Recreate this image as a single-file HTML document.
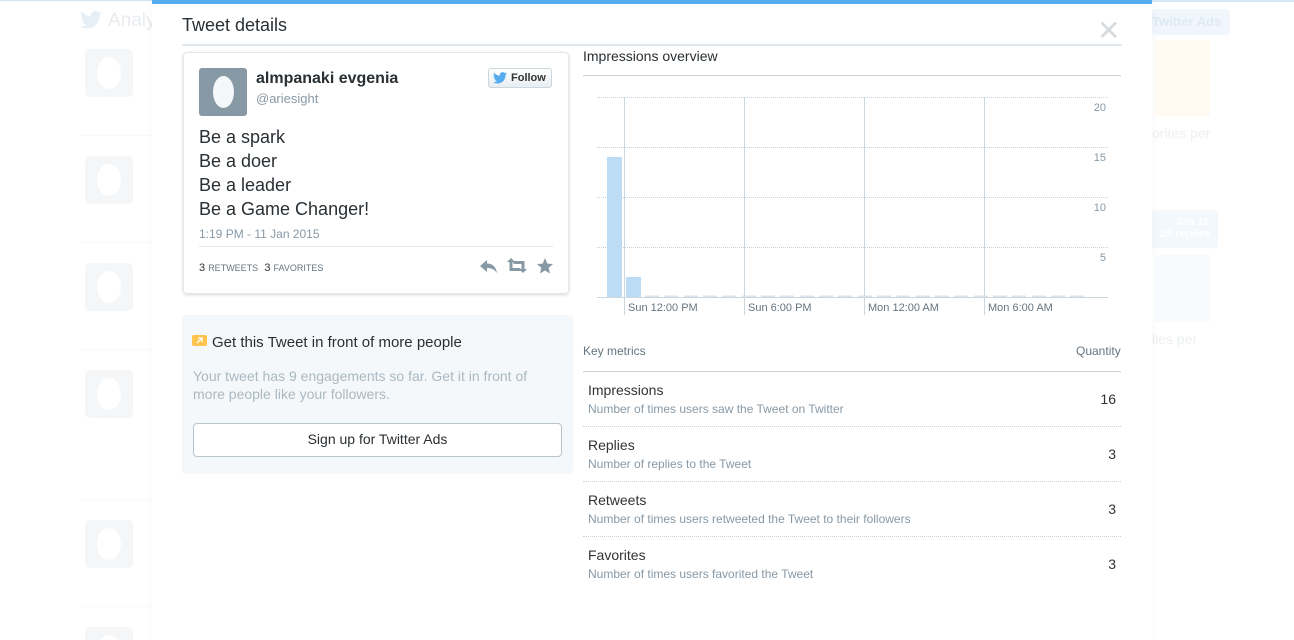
<!DOCTYPE html>
<html style="overflow:hidden;width:1294px;height:640px"><head><meta charset="utf-8"><style>
*{margin:0;padding:0;box-sizing:border-box}
body{width:1294px;height:640px;overflow:hidden;background:#fff;font-family:"Liberation Sans",Arial,sans-serif;position:relative}
.abs{position:absolute}
.av{position:absolute;left:85px;width:48px;height:48px;background:#f5f6f8;border-radius:5px;overflow:hidden}
.av::after{content:"";position:absolute;left:12px;top:8px;width:24px;height:32px;border-radius:50%;background:#fff}
.sep{position:absolute;left:80px;width:72px;height:1px;background:#f8f9fa}
.modal{position:absolute;left:152px;top:0;width:1000px;height:640px;background:#fff;border-top:4px solid #55acee;box-shadow:0 0 8px rgba(0,0,0,.04)}
.t{position:absolute;white-space:nowrap}
.row{position:absolute;left:583px;width:538px;height:55px;border-bottom:1px dotted #c8d2da}
.row .n{position:absolute;left:5px;top:10px;font-size:14px;color:#333}
.row .d{position:absolute;left:5px;top:30px;font-size:12px;color:#8899a6}
.row .q{position:absolute;right:5px;top:19px;font-size:14px;color:#333}
</style></head><body>
<div class="abs" style="left:0;top:0;width:1294px;height:1px;background:#cfe4f6"></div>
<div class="abs" style="left:1152px;top:0;width:142px;height:2px;background:#d5e8f8"></div>
<svg class="abs" style="left:80px;top:11px" width="22" height="18" viewBox="0 0 24 20"><path d="M24 2.4a9.8 9.8 0 0 1-2.8.8A4.9 4.9 0 0 0 23.3.4a9.9 9.9 0 0 1-3.1 1.2A4.9 4.9 0 0 0 11.8 6 14 14 0 0 1 1.7.9a4.9 4.9 0 0 0 1.5 6.6 4.9 4.9 0 0 1-2.2-.6 4.9 4.9 0 0 0 3.9 4.8 4.9 4.9 0 0 1-2.2.1 4.9 4.9 0 0 0 4.6 3.4A9.9 9.9 0 0 1 0 17.2 14 14 0 0 0 7.5 19.4c9.1 0 14-7.5 14-14v-.6A10 10 0 0 0 24 2.4z" fill="#e6eef6"/></svg>
<div class="t" style="left:108px;top:10px;font-size:19px;color:#e8ebee">Analy</div>
<div class="av" style="top:49px"></div>
<div class="av" style="top:156px"></div>
<div class="av" style="top:263px"></div>
<div class="av" style="top:370px"></div>
<div class="av" style="top:520px"></div>
<div class="av" style="top:627px;height:13px;border-radius:5px 5px 0 0"></div>
<div class="sep" style="top:135px"></div>
<div class="sep" style="top:242px"></div>
<div class="sep" style="top:349px"></div>
<div class="sep" style="top:499px"></div>
<div class="sep" style="top:606px"></div>
<div class="abs" style="left:1152px;top:9px;width:78px;height:26px;background:#f0f6fc;border-radius:4px"></div>
<div class="t" style="left:1152px;top:14px;font-size:13px;font-weight:bold;color:#dfe9f3">Twitter Ads</div>
<div class="abs" style="left:1155px;top:40px;width:55px;height:76px;background:#fffaf2"></div>
<div class="t" style="left:1152px;top:125px;font-size:14px;color:#eceff1">orites per</div>
<div class="abs" style="left:1152px;top:210px;width:66px;height:38px;background:#f3f8fd;border-radius:3px"></div>
<div class="t" style="left:1160px;top:216px;font-size:11px;font-weight:bold;color:#fff">&nbsp;&nbsp;&nbsp;&nbsp;&nbsp;Jan 11<br>29 replies</div>
<div class="abs" style="left:1155px;top:255px;width:55px;height:67px;background:#f8fbfe"></div>
<div class="t" style="left:1152px;top:331px;font-size:14px;color:#eceff1">lies per</div>

<div class="modal"></div>
<div class="t" style="left:182px;top:15px;font-size:18px;color:#292f33">Tweet details</div>
<div class="t" style="left:1097px;top:14px;font-size:28px;color:#d6dbdf">✕</div>
<div class="abs" style="left:182px;top:44px;width:940px;height:2px;background:#e1e8ed"></div>

<div class="abs" style="left:183px;top:52px;width:386px;height:242px;border:1px solid #e1e8ed;border-radius:4px;box-shadow:0 1px 3px rgba(0,0,0,.15);background:#fff"></div>
<div class="abs" style="left:199px;top:68px;width:48px;height:48px;background:#8899a6;border-radius:3px"></div>
<div class="abs" style="left:213px;top:76px;width:21px;height:32px;background:#f5f8fa;border-radius:50%"></div>
<div class="t" style="left:256px;top:70px;font-size:16px;font-weight:bold;color:#292f33">almpanaki evgenia</div>
<div class="t" style="left:256px;top:91px;font-size:13px;color:#8899a6">@ariesight</div>
<div class="abs" style="left:488px;top:68px;width:64px;height:20px;border:1px solid #ccd6dd;border-radius:3px;background:linear-gradient(#fff,#e8eef2)"></div>
<svg class="abs" style="left:493px;top:72px" width="14" height="12" viewBox="0 0 24 20"><path d="M24 2.4a9.8 9.8 0 0 1-2.8.8A4.9 4.9 0 0 0 23.3.4a9.9 9.9 0 0 1-3.1 1.2A4.9 4.9 0 0 0 11.8 6 14 14 0 0 1 1.7.9a4.9 4.9 0 0 0 1.5 6.6 4.9 4.9 0 0 1-2.2-.6 4.9 4.9 0 0 0 3.9 4.8 4.9 4.9 0 0 1-2.2.1 4.9 4.9 0 0 0 4.6 3.4A9.9 9.9 0 0 1 0 17.2 14 14 0 0 0 7.5 19.4c9.1 0 14-7.5 14-14v-.6A10 10 0 0 0 24 2.4z" fill="#55acee"/></svg>
<div class="t" style="left:511px;top:72px;font-size:11px;font-weight:bold;color:#333">Follow</div>
<div class="t" style="left:199px;top:125px;font-size:18px;line-height:24px;color:#292f33">Be a spark<br>Be a doer<br>Be a leader<br>Be a Game Changer!</div>
<div class="t" style="left:199px;top:227px;font-size:12px;color:#8899a6">1:19 PM - 11 Jan 2015</div>
<div class="abs" style="left:199px;top:246px;width:354px;height:1px;background:#e1e8ed"></div>
<div class="t" style="left:199px;top:262px;font-size:11px;color:#66757f"><span style="color:#333">3</span> <span style="font-size:9px">RETWEETS</span> &nbsp;<span style="color:#333">3</span> <span style="font-size:9px">FAVORITES</span></div>
<svg class="abs" style="left:478px;top:257px" width="76" height="18" viewBox="0 0 76 18">
<path d="M2 9 L9 3 V6.5 C14 6.5 18 9.5 19 16 C16 12 13 11 9 11 V15 Z" fill="#8899a6"/>
<path d="M29 5 L33 1 L37 5 H34.5 V11 H42 L44 14 H31.5 V5 Z M49 12 L45 16 L41 12 H43.5 V7 H36 L34 4 H46.5 V12 Z" fill="#8899a6"/>
<path d="M67 1 L69.3 6.6 L75 7 L70.7 10.8 L72 16.5 L67 13.5 L62 16.5 L63.3 10.8 L59 7 L64.7 6.6 Z" fill="#8899a6"/>
</svg>

<div class="abs" style="left:182px;top:315px;width:391px;height:159px;background:#f5f8fa;border-radius:3px"></div>
<div class="abs" style="left:192px;top:335px;width:15px;height:11px;background:#ffc44d;border-radius:2px"></div>
<svg class="abs" style="left:195px;top:336px" width="9" height="9" viewBox="0 0 9 9"><path d="M2 7 L7 2 M3 2 H7 V6" stroke="#fff" stroke-width="1.3" fill="none"/></svg>
<div class="t" style="left:212px;top:334px;font-size:15px;color:#292f33">Get this Tweet in front of more people</div>
<div class="t" style="left:193px;top:367px;font-size:14px;line-height:18px;color:#aab8c2">Your tweet has 9 engagements so far. Get it in front of<br>more people like your followers.</div>
<div class="abs" style="left:193px;top:423px;width:369px;height:34px;border:1px solid #b8c4cc;border-radius:4px;background:#fff"></div>
<div class="t" style="left:193px;top:431px;width:369px;text-align:center;font-size:14px;color:#292f33">Sign up for Twitter Ads</div>

<div class="t" style="left:583px;top:48px;font-size:14px;color:#292f33">Impressions overview</div>
<div class="abs" style="left:583px;top:75px;width:538px;height:1px;background:#c8d2da"></div>
<svg class="abs" style="left:590px;top:90px" width="530" height="230">
<g stroke="#c8d2da" stroke-dasharray="1 1"><line x1="7" y1="7.5" x2="518" y2="7.5"/><line x1="7" y1="57.5" x2="518" y2="57.5"/><line x1="7" y1="107.5" x2="518" y2="107.5"/><line x1="7" y1="157.5" x2="518" y2="157.5"/></g>
<g stroke="#ccd6dd"><line x1="34.5" y1="7" x2="34.5" y2="225"/><line x1="154.5" y1="7" x2="154.5" y2="225"/><line x1="274.5" y1="7" x2="274.5" y2="225"/><line x1="394.5" y1="7" x2="394.5" y2="225"/><line x1="7" y1="207.5" x2="518" y2="207.5"/></g>
<rect x="17" y="67" width="15" height="140" fill="#bbdcf4"/>
<rect x="36" y="187" width="15" height="20" fill="#bbdcf4"/>
<g fill="#dde3e8">
<rect x="55" y="205.5" width="14" height="1.5"/><rect x="74" y="205.5" width="14" height="1.5"/><rect x="94" y="205.5" width="14" height="1.5"/><rect x="113" y="205.5" width="14" height="1.5"/><rect x="132" y="205.5" width="14" height="1.5"/><rect x="152" y="205.5" width="14" height="1.5"/><rect x="171" y="205.5" width="14" height="1.5"/><rect x="190" y="205.5" width="14" height="1.5"/><rect x="210" y="205.5" width="14" height="1.5"/><rect x="229" y="205.5" width="14" height="1.5"/><rect x="248" y="205.5" width="14" height="1.5"/><rect x="268" y="205.5" width="14" height="1.5"/><rect x="287" y="205.5" width="14" height="1.5"/><rect x="306" y="205.5" width="14" height="1.5"/><rect x="326" y="205.5" width="14" height="1.5"/><rect x="345" y="205.5" width="14" height="1.5"/><rect x="364" y="205.5" width="14" height="1.5"/><rect x="384" y="205.5" width="14" height="1.5"/><rect x="403" y="205.5" width="14" height="1.5"/><rect x="422" y="205.5" width="14" height="1.5"/><rect x="442" y="205.5" width="14" height="1.5"/><rect x="461" y="205.5" width="14" height="1.5"/><rect x="480" y="205.5" width="14" height="1.5"/>
</g>
<g font-family="Liberation Sans,Arial,sans-serif" font-size="11" fill="#8899a6" text-anchor="end"><text x="516" y="21">20</text><text x="516" y="71">15</text><text x="516" y="121">10</text><text x="516" y="171">5</text></g>
<g font-family="Liberation Sans,Arial,sans-serif" font-size="11" fill="#66757f"><text x="38" y="221">Sun 12:00 PM</text><text x="158" y="221">Sun 6:00 PM</text><text x="278" y="221">Mon 12:00 AM</text><text x="398" y="221">Mon 6:00 AM</text></g>
</svg>

<div class="t" style="left:583px;top:344px;font-size:12px;color:#66757f">Key metrics</div>
<div class="t" style="left:1076px;top:344px;font-size:12px;color:#66757f">Quantity</div>
<div class="abs" style="left:583px;top:371px;width:538px;height:1px;background:#c8d2da"></div>
<div class="row" style="top:372px"><div class="n">Impressions</div><div class="d">Number of times users saw the Tweet on Twitter</div><div class="q">16</div></div>
<div class="row" style="top:427px"><div class="n">Replies</div><div class="d">Number of replies to the Tweet</div><div class="q">3</div></div>
<div class="row" style="top:482px"><div class="n">Retweets</div><div class="d">Number of times users retweeted the Tweet to their followers</div><div class="q">3</div></div>
<div class="row" style="top:537px;border-bottom:none"><div class="n">Favorites</div><div class="d">Number of times users favorited the Tweet</div><div class="q">3</div></div>
</body></html>
